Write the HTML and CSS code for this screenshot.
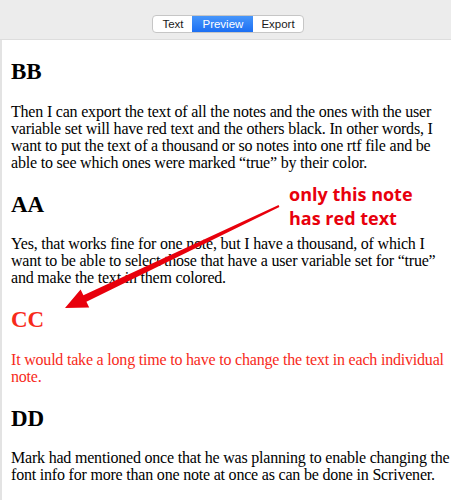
FILE: index.html
```html
<!DOCTYPE html>
<html>
<head>
<meta charset="utf-8">
<link rel="stylesheet" href="styles.css">
</head>
<body>
<div class="page">
  <div class="toolbar">
    <div class="seg">
      <span class="seg-item">Text</span>
      <span class="seg-item active">Preview</span>
      <span class="seg-item last">Export</span>
    </div>
  </div>
  <div class="content">
    <h2>BB</h2>
    <p>Then I can export the text of all the notes and the ones with the user variable set will have red text and the others black. In other words, I want to put the text of a thousand or so notes into one rtf file and be able to see which ones were marked “true” by their color.</p>
    <h2>AA</h2>
    <p>Yes, that works fine for one note, but I have a thousand, of which I want to be able to select those that have a user variable set for “true” and make the text in them colored.</p>
    <h2 class="red">CC</h2>
    <p class="red">It would take a long time to have to change the text in each individual note.</p>
    <h2>DD</h2>
    <p>Mark had mentioned once that he was planning to enable changing the font info for more than one note at once as can be done in Scrivener.</p>
  </div>
  <div class="note">only this note<br>has red text</div>
  <svg class="arrow" width="451" height="500" viewBox="0 0 451 500">
    <polygon fill="#e8000c" points="278.6,205.1 83.4,295.3 80.6,289.5 65,308 89.2,307.5 86.4,301.7 279.4,206.9"/>
  </svg>
</div>
</body>
</html>
```

FILE: styles.css
```css
html, body {
  margin: 0;
  padding: 0;
  background: #ffffff;
}
.page {
  position: relative;
  width: 451px;
  height: 500px;
  overflow: hidden;
}
.toolbar {
  height: 40px;
  background: #ececec;
  border-bottom: 1px solid #dddddd;
  box-sizing: border-box;
  display: flex;
  justify-content: center;
  padding-top: 15px;
  padding-left: 5px;
}
.seg {
  display: flex;
  height: 18px;
  border: 1px solid #c6c6c6;
  border-radius: 4px;
  background: #ffffff;
  overflow: hidden;
  box-sizing: border-box;
  font-family: "Liberation Sans", Arial, sans-serif;
  font-size: 11.5px;
  color: #1a1a1a;
}
.seg-item {
  display: flex;
  align-items: center;
  justify-content: center;
  padding: 0 9px;
  line-height: 16px;
}
.seg-item.active {
  background: linear-gradient(#4796fb, #1c6ff3);
  color: #ffffff;
  padding: 0 10px;
}
.seg-item.last {
  padding: 0 8px;
}
.content {
  border-left: 2px solid #e3e3e3;
  padding: 19px 0 0 9px;
  min-height: 441px;
  font-family: "Liberation Serif", "Times New Roman", serif;
  font-size: 16px;
  color: #000000;
}
.content h2 {
  font-size: 23px;
  font-weight: bold;
  margin: 0 0 17.5px;
  line-height: 26px;
}
.content p {
  margin: 0 0 21px;
  line-height: 17px;
  letter-spacing: -0.2px;
}
.red {
  color: #f72a1a;
}
.note {
  position: absolute;
  left: 289px;
  top: 182px;
  font-family: "Open Sans", "Noto Sans", sans-serif;
  font-weight: bold;
  font-size: 18px;
  line-height: 24px;
  color: #e8000c;
}
.arrow {
  position: absolute;
  left: 0;
  top: 0;
  pointer-events: none;
}
```
